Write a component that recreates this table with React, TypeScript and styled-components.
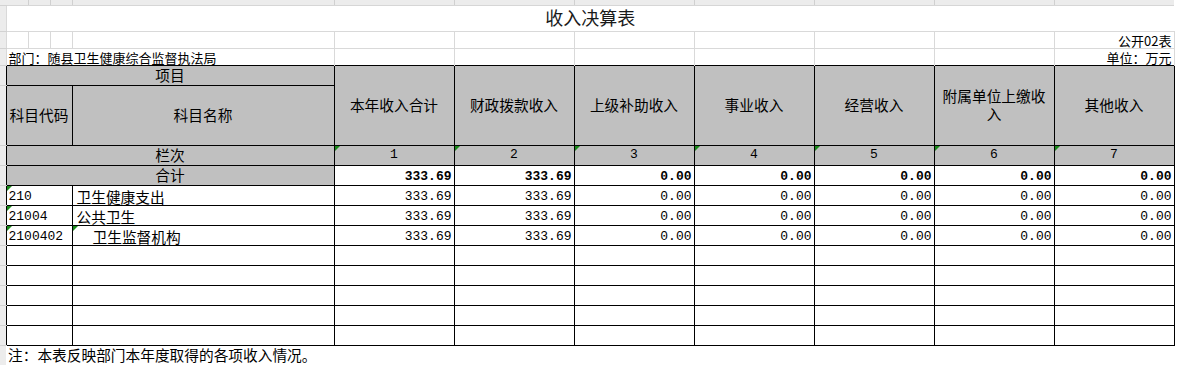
import React from 'react'
import styled, { createGlobalStyle, css } from 'styled-components'

const GRID = '#d9d9d9'
const GUTTER = '#ececec'
const HEAD_BG = '#c0c0c0'
const CJK = `'Noto Sans CJK SC', 'Noto Sans', sans-serif`
const MONO = `'Liberation Mono', 'DejaVu Sans Mono', monospace`

const GlobalStyle = createGlobalStyle`
	html, body {
		margin: 0;
		padding: 0;
		background: #fff;
	}
	body {
		font-family: ${CJK};
		color: #000;
	}
`

const Sheet = styled.div`
	width: 1177px;
	height: 365px;
	overflow: hidden;
	background: #fff;
`

const Grid = styled.table`
	width: 1177px;
	border-collapse: collapse;
	table-layout: fixed;
	font-family: ${CJK};
	font-size: 14.7px;
	color: #000;
`

const Row = styled.tr<{ $h: number }>`
	height: ${p => p.$h}px;
`

const flagMark = css`
	&::before {
		content: '';
		position: absolute;
		top: 0;
		left: 0;
		border-top: 5px solid #1a8a1a;
		border-right: 5px solid transparent;
	}
`

const Cell = styled.td<{ $align?: 'left' | 'center' | 'right'; $flag?: boolean; $indent?: number }>`
	position: relative;
	padding: 0 2px 0 ${p => 2 + (p.$indent || 0)}px;
	overflow: visible;
	white-space: nowrap;
	text-align: ${p => p.$align || 'left'};
	line-height: 17px;
	${p => p.$flag && flagMark}
`

const Gutter = styled.td`
	padding: 0;
	background: ${GUTTER};
	border-bottom: 1px solid #d2d2d2;
`

const StripCell = styled.td<{ $line?: boolean }>`
	padding: 0;
	background: ${GUTTER};
	border-left: ${p => (p.$line ? `1px solid #d0d0d0` : 'none')};
	border-bottom: 1px solid #d6d6d6;
`

const LooseCell = styled(Cell)<{ $small?: boolean }>`
	border-left: 1px solid ${GRID};
	border-right: 1px solid ${GRID};
	border-top: 1px solid ${GRID};
	font-size: ${p => (p.$small ? '13px' : '14.7px')};
	line-height: 15px;
	vertical-align: bottom;
	padding-bottom: 0;
`

const Title = styled.td`
	border-top: 1px solid ${GRID};
	border-left: 1px solid ${GRID};
	text-align: center;
	font-size: 18px;
	line-height: 22px;
	color: #1a1a1a;
	padding: 0 0 2px;
`

const HeadCell = styled(Cell)`
	background: ${HEAD_BG};
	border: 1px solid #000;
	text-align: ${p => p.$align || 'center'};
	white-space: normal;
	line-height: 18px;
`

const BodyCell = styled(Cell)`
	border: 1px solid #000;
	background: #fff;
	padding-top: 2px;
`

const Num = styled(BodyCell)<{ $bold?: boolean }>`
	font-family: ${MONO};
	font-size: 13px;
	font-weight: ${p => (p.$bold ? 700 : 400)};
	text-align: right;
	padding-right: 2px;
`

const Code = styled(BodyCell)`
	font-family: ${MONO};
	font-size: 13px;
`

const ColNo = styled(HeadCell)`
	font-family: ${MONO};
	font-size: 13px;
`

const Note = styled.td`
	padding: 0 2px;
	font-size: 14.7px;
	line-height: 16px;
	vertical-align: middle;
	white-space: nowrap;
`

const RightGutter = styled.td`
	padding: 0;
	background: #fff;
`

const widths = [6, 22, 22, 22, 262, 120, 120, 120, 120, 120, 120, 120, 3]

const heads = ['本年收入合计', '财政拨款收入', '上级补助收入', '事业收入', '经营收入', '附属单位上缴收\n入', '其他收入']

type Item = { code: string; name: string; indent?: number; nameFlag?: boolean; values: string[] }

const zeros = ['0.00', '0.00', '0.00', '0.00', '0.00']

const items: Item[] = [
	{ code: '210', name: '卫生健康支出', values: ['333.69', '333.69', ...zeros] },
	{ code: '21004', name: '公共卫生', values: ['333.69', '333.69', ...zeros] },
	{ code: '2100402', name: '卫生监督机构', indent: 16, nameFlag: true, values: ['333.69', '333.69', ...zeros] },
]

const totals = ['333.69', '333.69', ...zeros]

const valueCols = [0, 1, 2, 3, 4, 5, 6]

const App: React.FC = () => {
	return (
		<Sheet>
			<GlobalStyle />
			<Grid>
				<colgroup>
					{widths.map((w, i) => <col key={i} style={{ width: w }} />)}
				</colgroup>
				<tbody>
					<Row $h={5}>
						<Gutter />
						{widths.slice(1, -1).map((_, i) => <StripCell key={i} $line={i !== 0} />)}
						<RightGutter />
					</Row>
					<Row $h={26}>
						<Gutter />
						<Title colSpan={11}>收入决算表</Title>
						<RightGutter />
					</Row>
					<Row $h={17}>
						<Gutter />
						{widths.slice(1, -2).map((_, i) => <LooseCell key={i} />)}
						<LooseCell $small $align='right'>公开02表</LooseCell>
						<RightGutter />
					</Row>
					<Row $h={17}>
						<Gutter />
						<LooseCell $small colSpan={4}>部门：随县卫生健康综合监督执法局</LooseCell>
						{valueCols.slice(0, 6).map(i => <LooseCell key={i} />)}
						<LooseCell $small $align='right'>单位：万元</LooseCell>
						<RightGutter />
					</Row>
					<Row $h={20}>
						<Gutter />
						<HeadCell colSpan={4}>项目</HeadCell>
						{heads.map(h => (
							<HeadCell key={h} rowSpan={2}>
								{h.split('\n').map((line, i) => (
									<React.Fragment key={i}>{i > 0 && <br />}{line}</React.Fragment>
								))}
							</HeadCell>
						))}
						<RightGutter />
					</Row>
					<Row $h={60}>
						<Gutter />
						<HeadCell colSpan={3}>科目代码</HeadCell>
						<HeadCell>科目名称</HeadCell>
						<RightGutter />
					</Row>
					<Row $h={20}>
						<Gutter />
						<HeadCell colSpan={4}>栏次</HeadCell>
						{valueCols.map(i => <ColNo key={i} $flag>{i + 1}</ColNo>)}
						<RightGutter />
					</Row>
					<Row $h={20}>
						<Gutter />
						<HeadCell colSpan={4}>合计</HeadCell>
						{totals.map((v, i) => <Num key={i} $bold>{v}</Num>)}
						<RightGutter />
					</Row>
					{items.map(item => (
						<Row $h={20} key={item.code}>
							<Gutter />
							<Code colSpan={3} $flag>{item.code}</Code>
							<BodyCell $indent={(item.indent || 0) + 2} $flag={item.nameFlag}>{item.name}</BodyCell>
							{item.values.map((v, i) => <Num key={i}>{v}</Num>)}
							<RightGutter />
						</Row>
					))}
					{[0, 1, 2, 3, 4].map(r => (
						<Row $h={20} key={`blank-${r}`}>
							<Gutter />
							<BodyCell colSpan={3} />
							<BodyCell />
							{valueCols.map(i => <BodyCell key={i} />)}
							<RightGutter />
						</Row>
					))}
					<Row $h={20}>
						<Gutter />
						<Note colSpan={11}>注：本表反映部门本年度取得的各项收入情况。</Note>
						<RightGutter />
					</Row>
				</tbody>
			</Grid>
		</Sheet>
	)
}

export default App
